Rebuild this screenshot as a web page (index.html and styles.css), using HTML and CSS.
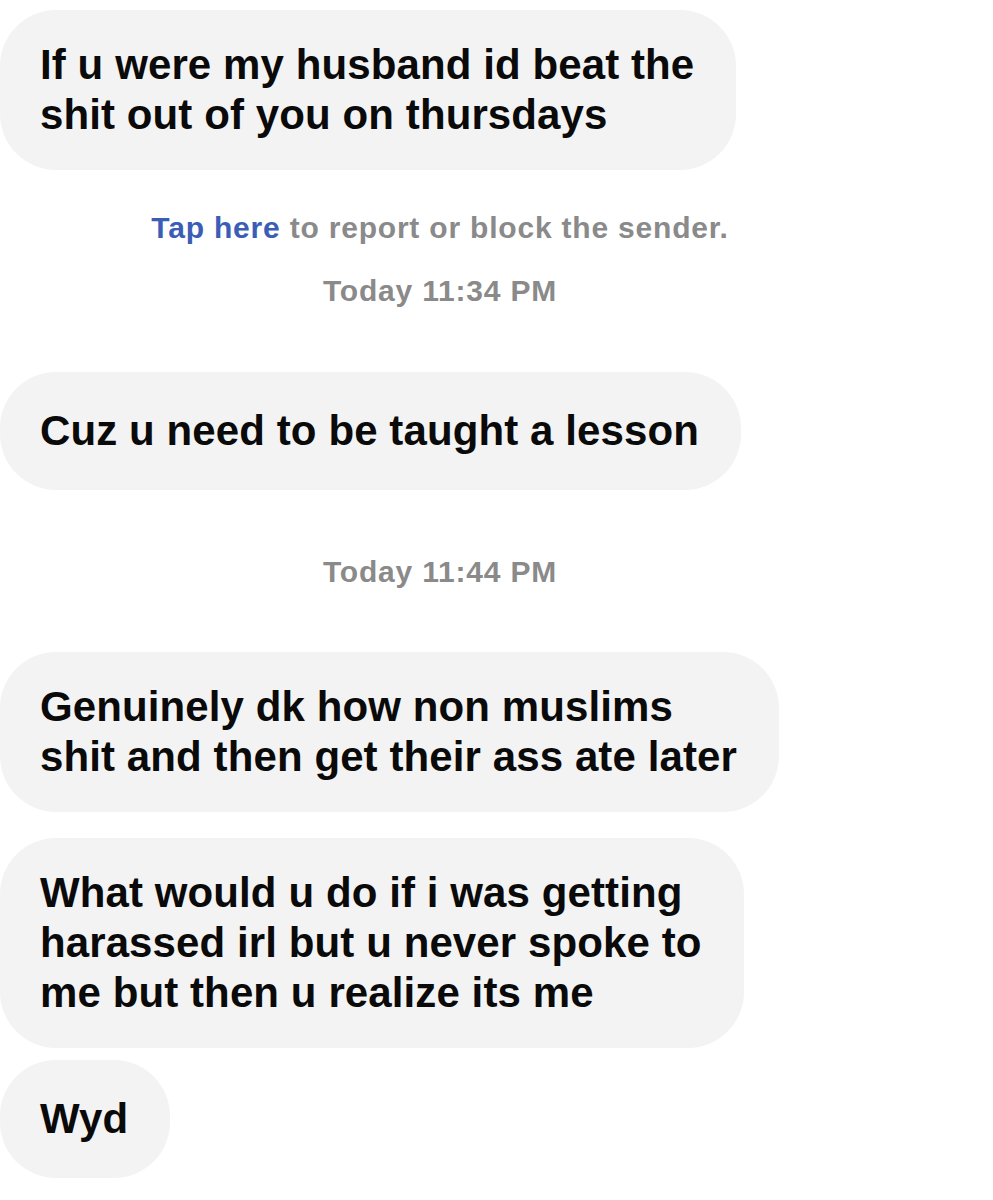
FILE: index.html
```html
<!DOCTYPE html>
<html lang="en">
<head>
<meta charset="utf-8">
<title>Messages</title>
<link rel="stylesheet" href="styles.css">
</head>
<body>
<div class="thread">
  <div class="bubble">If u were my husband id beat the<br>shit out of you on thursdays</div>
  <div class="meta meta-first">
    <div class="meta-line"><span class="link">Tap here</span> to report or block the sender.</div>
    <div class="meta-line stamp">Today 11:34 PM</div>
  </div>
  <div class="bubble">Cuz u need to be taught a lesson</div>
  <div class="meta meta-second">
    <div class="meta-line">Today 11:44 PM</div>
  </div>
  <div class="bubble">Genuinely dk how non muslims<br>shit and then get their ass ate later</div>
  <div class="bubble gap-md">What would u do if i was getting<br>harassed irl but u never spoke to<br>me but then u realize its me</div>
  <div class="bubble gap-sm">Wyd</div>
</div>
</body>
</html>
```

FILE: styles.css
```css
html, body {
  margin: 0;
  padding: 0;
  background: #ffffff;
}

.thread {
  display: flex;
  flex-direction: column;
  align-items: flex-start;
  padding-top: 10px;
  font-family: "Liberation Sans", Arial, sans-serif;
}

.bubble {
  box-sizing: border-box;
  min-height: 118px;
  display: flex;
  align-items: center;
  padding: 30px 42px 30px 40px;
  background: #f3f3f3;
  border-radius: 56px;
  color: #0a0a0a;
  font-size: 42px;
  font-weight: 700;
  letter-spacing: 0.1px;
  line-height: 50px;
  white-space: nowrap;
}

.gap-md {
  margin-top: 26px;
}

.gap-sm {
  margin-top: 12px;
}

.meta {
  width: 880px;
  display: flex;
  flex-direction: column;
  align-items: center;
  gap: 29px;
  color: #8a8a8a;
  font-size: 30px;
  font-weight: 700;
  letter-spacing: 0.8px;
  line-height: 34px;
}

.meta-first {
  padding: 41px 0 64px;
}

.meta-second {
  padding: 65px 0 63px;
}

.link {
  color: #3b5db6;
}
```
